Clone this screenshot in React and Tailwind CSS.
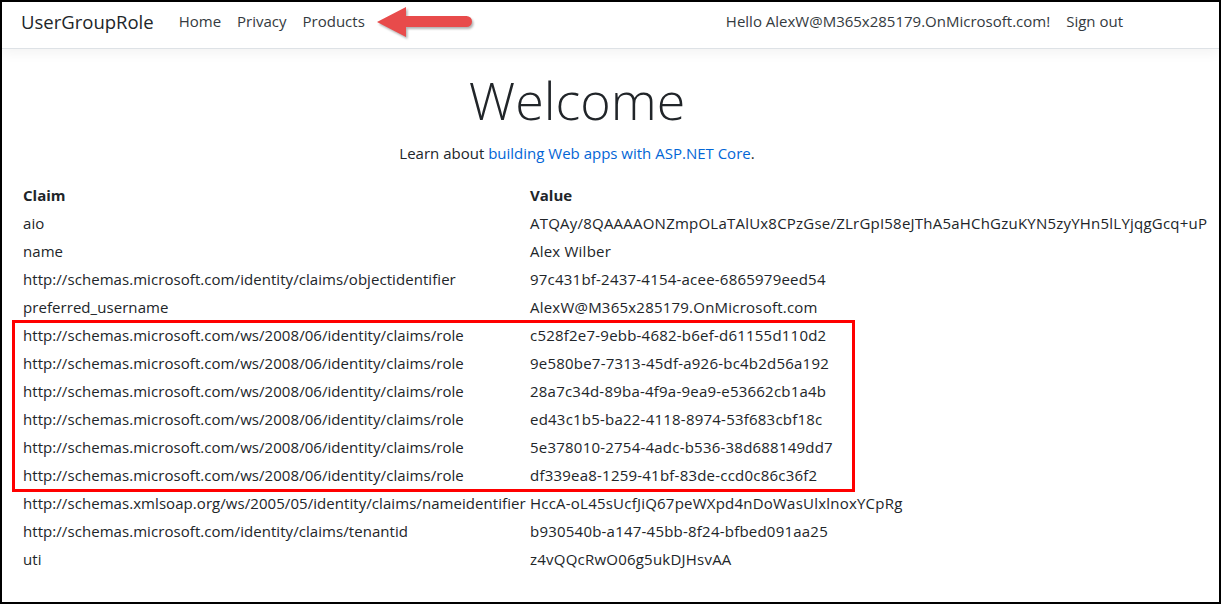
import React from 'react';

const claims = [
  ['aio', 'ATQAy/8QAAAAONZmpOLaTAlUx8CPzGse/ZLrGpI58eJThA5aHChGzuKYN5zyYHn5lLYjqgGcq+uP'],
  ['name', 'Alex Wilber'],
  ['http://schemas.microsoft.com/identity/claims/objectidentifier', '97c431bf-2437-4154-acee-6865979eed54'],
  ['preferred_username', 'AlexW@M365x285179.OnMicrosoft.com'],
  ['http://schemas.microsoft.com/ws/2008/06/identity/claims/role', 'c528f2e7-9ebb-4682-b6ef-d61155d110d2'],
  ['http://schemas.microsoft.com/ws/2008/06/identity/claims/role', '9e580be7-7313-45df-a926-bc4b2d56a192'],
  ['http://schemas.microsoft.com/ws/2008/06/identity/claims/role', '28a7c34d-89ba-4f9a-9ea9-e53662cb1a4b'],
  ['http://schemas.microsoft.com/ws/2008/06/identity/claims/role', 'ed43c1b5-ba22-4118-8974-53f683cbf18c'],
  ['http://schemas.microsoft.com/ws/2008/06/identity/claims/role', '5e378010-2754-4adc-b536-38d688149dd7'],
  ['http://schemas.microsoft.com/ws/2008/06/identity/claims/role', 'df339ea8-1259-41bf-83de-ccd0c86c36f2'],
  ['http://schemas.xmlsoap.org/ws/2005/05/identity/claims/nameidentifier', 'HccA-oL45sUcfJiQ67peWXpd4nDoWasUlxlnoxYCpRg'],
  ['http://schemas.microsoft.com/identity/claims/tenantid', 'b930540b-a147-45bb-8f24-bfbed091aa25'],
  ['uti', 'z4vQQcRwO06g5ukDJHsvAA'],
];

function Arrow() {
  const d = 'M5 20 L34 5 L34 14 L94.5 14 A5.5 5.5 0 0 1 94.5 25 L34 25 L34 35 Z';
  return (
    <svg className="absolute left-[370px] top-0" width="110" height="44" viewBox="0 0 110 44">
      <defs>
        <filter id="arrowShadow" x="-20%" y="-20%" width="140%" height="160%">
          <feGaussianBlur stdDeviation="1.2" />
        </filter>
      </defs>
      <path d={d} fill="rgba(0,0,0,0.3)" transform="translate(1.5 2)" filter="url(#arrowShadow)" />
      <path d={d} fill="#e84b4b" />
    </svg>
  );
}

export default function App() {
  return (
    <div className="relative w-[1221px] h-[604px] overflow-hidden border-2 border-black bg-white text-[#212529] font-['Open_Sans',sans-serif] text-[15px]">
      <header className="flex h-[47px] items-center border-b border-[#dee2e6] pb-[7px] pl-[19px] pr-[88px] shadow-[0_4px_12px_rgba(0,0,0,0.05)]">
        <span className="mr-[17px] text-[18.5px] text-[#212529]">UserGroupRole</span>
        <nav className="flex text-[#343a40]">
          <span className="px-[8px]">Home</span>
          <span className="px-[8px]">Privacy</span>
          <span className="px-[8px]">Products</span>
        </nav>
        <div className="ml-auto flex text-[#343a40]">
          <span className="px-[8px]">Hello AlexW@M365x285179.OnMicrosoft.com!</span>
          <span className="px-[8px]">Sign out</span>
        </div>
      </header>

      <main className="pl-[21px] pt-[20px]">
        <div className="w-[1108px] text-center">
          <h1 className="text-[52px] font-light leading-[1.2] text-[#212529]">Welcome</h1>
          <p className="mt-[11px]">
            Learn about <span className="text-[#0366d6]">building Web apps with ASP.NET Core</span>.
          </p>
        </div>

        <table className="mt-[16px] border-collapse text-left whitespace-nowrap">
          <thead>
            <tr className="h-[28px]">
              <th className="w-[507px] p-0 font-bold">Claim</th>
              <th className="p-0 font-bold">Value</th>
            </tr>
          </thead>
          <tbody>
            {claims.map(([claim, value], i) => (
              <tr key={i} className="h-[28px]">
                <td className="p-0 tracking-[0.06px]">{claim}</td>
                <td className="p-0 tracking-[0.22px]">{value}</td>
              </tr>
            ))}
          </tbody>
        </table>
      </main>

      <Arrow />
      <div className="absolute left-[10px] top-[318px] h-[172px] w-[843px] border-[3px] border-[#ff0000]" />
    </div>
  );
}
